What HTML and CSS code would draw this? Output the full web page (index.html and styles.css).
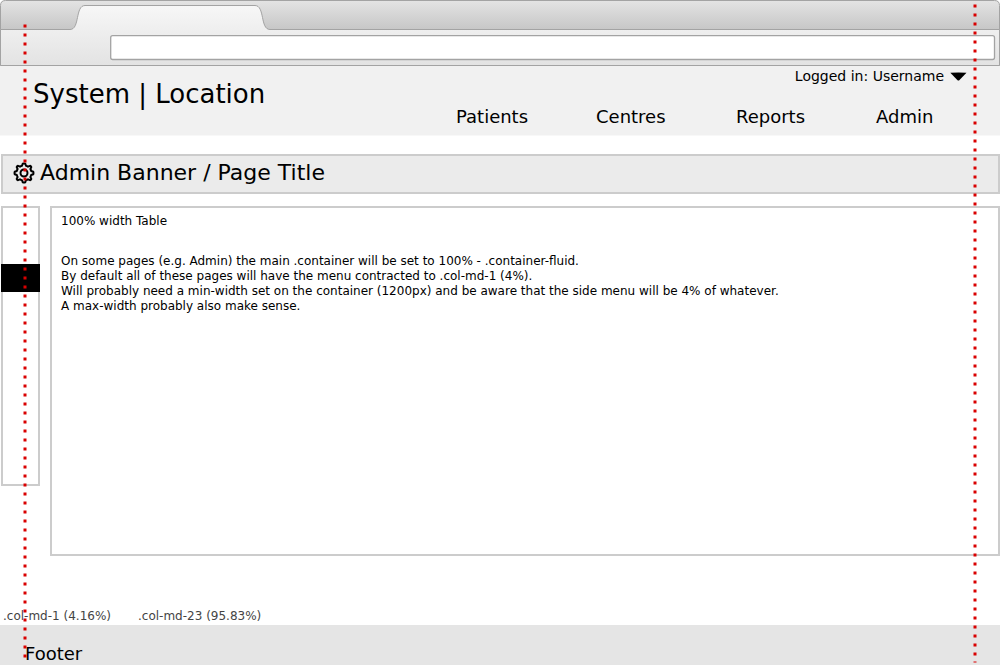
FILE: index.html
```html
<!DOCTYPE html>
<html lang="en">
<head>
<meta charset="utf-8">
<title>Admin page wireframe</title>
<link rel="stylesheet" href="styles.css">
</head>
<body>
<div class="page">
  <svg class="chrome" viewBox="0 0 1000 66" width="1000" height="66" aria-hidden="true">
    <defs>
      <linearGradient id="frame" x1="0" y1="0" x2="0" y2="30" gradientUnits="userSpaceOnUse"><stop offset="0" stop-color="#e4e4e4"/><stop offset="1" stop-color="#c6c6c6"/></linearGradient>
      <linearGradient id="bar" x1="0" y1="5" x2="0" y2="65" gradientUnits="userSpaceOnUse"><stop offset="0" stop-color="#f7f7f7"/><stop offset="1" stop-color="#e3e3e3"/></linearGradient>
    </defs>
    <path d="M.5 65.5V5.5Q.5.5 5.5.5H994.500Q999.500.5 999.500 5.500V65.500Z" fill="url(#frame)" stroke="#a3a3a3"/>
    <path d="M.5 65.500V29.500H70C80 29.500 75 5.500 85 5.500H255C265 5.500 260 29.500 270 29.500H999.500V65.500Z" fill="url(#bar)" stroke="#a3a3a3"/>
    <rect x="110.700" y="35.700" width="883.800" height="23.800" rx="2" fill="#fff" stroke="#a3a3a3" stroke-width="1.300"/>
  </svg>
  <header class="header">
    <div class="brand">System | Location</div>
    <div class="header-right">
      <div class="user">Logged in: Username
        <svg class="caret" width="17" height="9" viewBox="0 0 17 9"><path d="M.300 .800Q8.500 0 16.500.800L9.500 7.900Q8.500 8.900 7.300 7.900Z"/></svg>
      </div>
      <nav class="nav"><span>Patients</span><span>Centres</span><span>Reports</span><span>Admin</span></nav>
    </div>
  </header>
  <div class="banner">
    <svg class="gear" width="22" height="22" viewBox="-11 -11 22 22">
      <path d="M-1.300-9.300Q0-9.700 1.300-9.300L2-7.200Q3.100-6.900 4-6.300L6-7.200Q7-6.900 7.300-5.900L6.400-4Q6.900-3 7.200-2L9.300-1.300Q9.700 0 9.300 1.300L7.200 2Q6.900 3 6.400 4L7.300 5.900Q7 6.900 6 7.200L4 6.300Q3.100 6.900 2 7.200L1.300 9.300Q0 9.700-1.300 9.300L-2 7.200Q-3.100 6.900-4 6.300L-6 7.200Q-7 6.900-7.300 5.900L-6.400 4Q-6.900 3-7.200 2L-9.300 1.300Q-9.700 0-9.300-1.300L-7.200-2Q-6.900-3-6.400-4L-7.300-5.900Q-7-6.900-6-7.200L-4-6.300Q-3.100-6.900-2-7.200Z"/>
      <circle r="3.500"/>
    </svg>
    <span>Admin Banner / Page Title</span>
  </div>
  <main class="content">
    <aside class="side"><div class="side-active"></div></aside>
    <section class="panel">
      <div class="panel-title">100% width Table</div>
      <p class="copy">On some pages (e.g. Admin) the main .container will be set to 100% - .container-fluid.<br>By default all of these pages will have the menu contracted to .col-md-1 (4%).<br>Will probably need a min-width set on the container (1200px) and be aware that the side menu will be 4% of whatever.<br>A max-width probably also make sense.</p>
    </section>
  </main>
  <div class="labels"><span class="label-side">.col-md-1 (4.16%)</span><span>.col-md-23 (95.83%)</span></div>
  <footer class="footer">Footer</footer>
  <svg class="guides" width="1000" height="666" viewBox="0 0 1000 666" aria-hidden="true">
    <path d="M25 24.500V659M975 4.500V662.500"/>
  </svg>
</div>
</body>
</html>
```
FILE: styles.css
```css
* { box-sizing: border-box; }
body { margin: 0; background: #fff; color: #000; font-family: "DejaVu Sans", sans-serif; }
.page { position: relative; width: 1000px; height: 666px; overflow: hidden; }
.chrome { display: block; }
.header { display: flex; justify-content: space-between; height: 70px; background: #f1f1f1; border-bottom: 1px solid #f8f8f8; }
.brand { padding: 13px 0 0 33px; font-size: 26px; line-height: 30px; white-space: nowrap; }
.header-right { width: 544px; }
.user { display: flex; align-items: center; justify-content: flex-end; gap: 6px; height: 20px; padding-right: 33px; font-size: 14px; }
.caret { margin-top: 1px; }
.nav { display: grid; grid-template-columns: repeat(4, 140px); margin-top: 20px; font-size: 18px; line-height: 22px; }
.banner { display: flex; align-items: center; height: 40px; margin: 18px 0 0 1px; padding: 0 0 2px 10px; gap: 5px; border: 2px solid #ccc; background: #ebebeb; font-size: 22px; line-height: 26px; white-space: nowrap; }
.gear { fill: none; stroke: #000; stroke-width: 2; stroke-linejoin: round; }
.content { display: flex; align-items: flex-start; gap: 10px; margin: 12px 0 0 1px; height: 350px; }
.side { width: 39px; height: 280px; padding-top: 56px; border: 2px solid #ccc; }
.side-active { width: 39px; height: 28px; margin-left: -2px; background: #000; }
.panel { flex: 1; height: 350px; padding: 6px 9px; border: 2px solid #ccc; font-size: 12px; line-height: 15px; white-space: nowrap; }
.copy { margin: 25px 0 0; }
.labels { display: flex; height: 69px; padding: 53px 0 0 3px; color: #444; font-size: 12px; line-height: 15px; }
.label-side { width: 135px; }
.footer { height: 40px; padding: 18px 0 0 25px; background: #e5e5e5; font-size: 18px; line-height: 22px; }
.guides { position: absolute; inset: 0; fill: none; stroke: #d90000; stroke-width: 3; stroke-dasharray: 3 6; }
```
